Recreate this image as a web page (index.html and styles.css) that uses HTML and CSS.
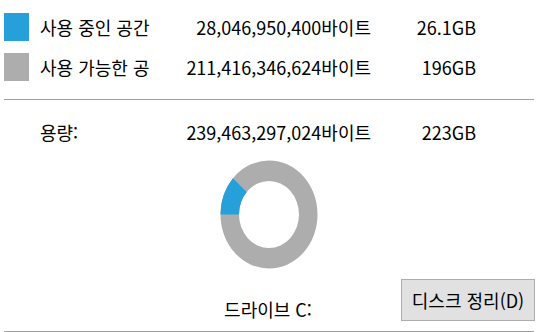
FILE: index.html
```html
<!DOCTYPE html>
<html lang="ko">
<head>
    <meta charset="UTF-8">
    <meta name="viewport" content="width=device-width, initial-scale=1.0">
    <title>드라이브 C: 속성</title>
    <link rel="stylesheet" href="styles.css">
</head>
<body>

<div class="panel">
    <div class="usage">
        <span class="swatch used"></span>
        <span class="label">사용 중인 공간</span>
        <span class="bytes">28,046,950,400바이트</span>
        <span class="size">26.1GB</span>

        <span class="swatch free"></span>
        <span class="label">사용 가능한 공</span>
        <span class="bytes">211,416,346,624바이트</span>
        <span class="size">196GB</span>

        <div class="sep"></div>

        <span class="label">용량:</span>
        <span class="bytes">239,463,297,024바이트</span>
        <span class="size">223GB</span>
    </div>

    <div class="chart">
        <svg width="98" height="109" viewBox="0 0 98 109">
            <path fill="#adadad" fill-rule="evenodd"
                  d="M0.5 54.5 A48.5 54 0 1 1 97.5 54.5 A48.5 54 0 1 1 0.5 54.5 Z
                     M19 54.5 A30 33.5 0 1 0 79 54.5 A30 33.5 0 1 0 19 54.5 Z"/>
            <path fill="#26a0da"
                  d="M0.5 54.5 A48.5 54 0 0 1 12.96 18.37 L26.71 32.09 A30 33.5 0 0 0 19 54.5 Z"/>
        </svg>
    </div>

    <div class="footer">
        <span class="drive">드라이브 C:</span>
        <button class="btn">디스크 정리(D)</button>
    </div>
    <div class="bottom-line"></div>
</div>

</body>
</html>
```

FILE: styles.css
```css
body { margin: 0; background: #fff; color: #000; font-family: "Noto Sans CJK KR", "Noto Sans", sans-serif; font-size: 18px; width: 542px; height: 332px; overflow: hidden; }
.panel { padding: 13px 7px 0 4px; }

/* Bảng dung lượng */
.usage { display: grid; grid-template-columns: 25px 11px 140px 191px 105px 1fr; row-gap: 12px; align-items: center; }
.usage > span { height: 28px; line-height: 28px; white-space: nowrap; }
.swatch { grid-column: 1; display: block; width: 25px; }
.swatch.used { background: #26a0da; }
.swatch.free { background: #adadad; }
.label { grid-column: 3; overflow: hidden; }
.bytes { grid-column: 4; text-align: right; }
.size { grid-column: 5; text-align: right; }
.sep { grid-column: 1 / -1; height: 1px; background: #a0a0a0; margin: 6px 1px 6px 0; }

/* Biểu đồ */
.chart { display: flex; justify-content: center; margin: 14px 2px 0 0; }
.chart svg { display: block; }

.footer { display: grid; grid-template-columns: 1fr auto 1fr; margin-top: 10px; }
.drive { grid-column: 2; align-self: end; line-height: 24px; margin-right: 3px; }
.btn { grid-column: 3; justify-self: end; width: 134px; height: 42px; padding: 0; background: #e1e1e1; border: 1px solid #adadad; border-radius: 0; font: inherit; color: #000; }
.bottom-line { height: 1px; background: #a0a0a0; margin: 10px 1px 0 0; }
```
